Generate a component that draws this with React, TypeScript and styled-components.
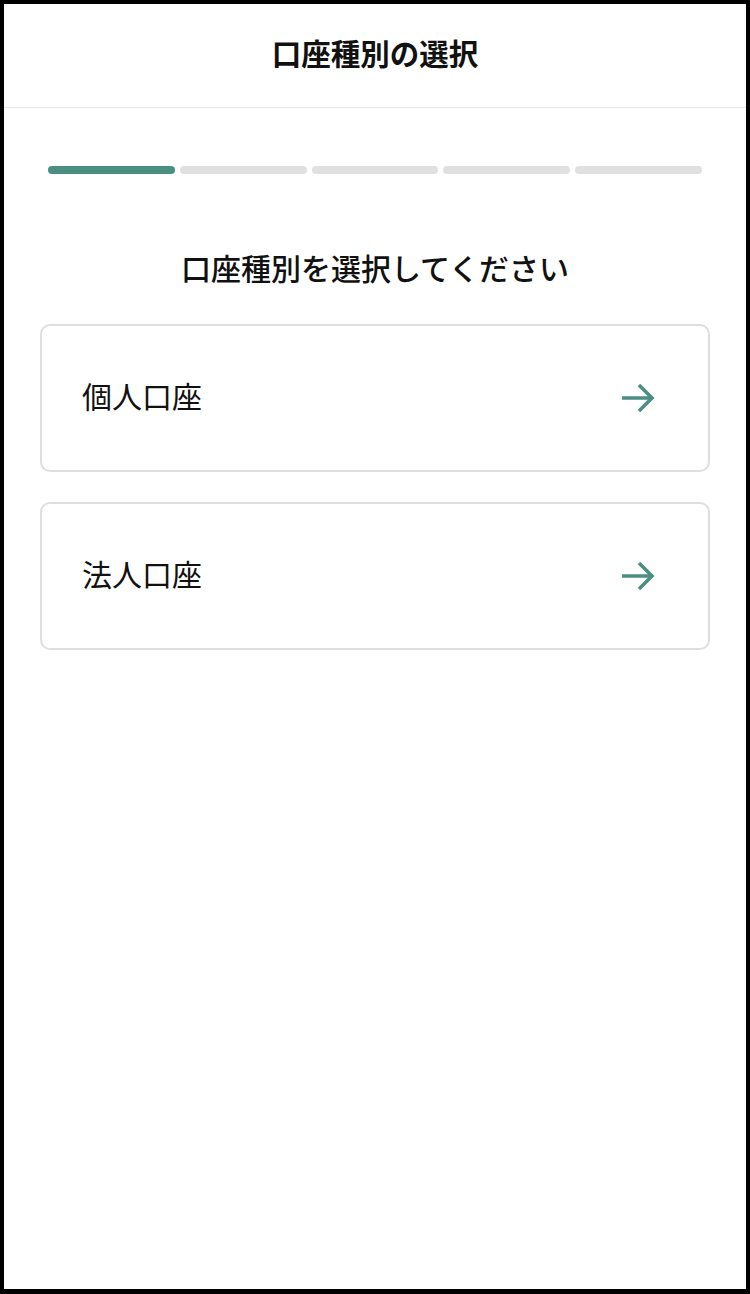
import React from "react";
import styled, { createGlobalStyle } from "styled-components";

const GlobalStyle = createGlobalStyle`
  html, body { margin: 0; padding: 0; background: #fff; }
  body { font-family: "Noto Sans CJK JP", "Noto Sans", sans-serif; color: #111; }
  * { box-sizing: border-box; }
`;

const Frame = styled.div`
  width: 750px;
  height: 1294px;
  border: 4px solid #000;
  border-bottom-width: 5px;
  background: #fff;
  display: flex;
  flex-direction: column;
`;

const Header = styled.header`
  height: 104px;
  border-bottom: 1px solid #e6e6e6;
  display: flex;
  align-items: center;
  justify-content: center;
  padding-bottom: 8px;
`;

const Title = styled.h1`
  margin: 0;
  font-size: 29.5px;
  font-weight: 700;
  letter-spacing: 0;
`;

const Content = styled.main`
  padding: 58px 36px 0;
  display: flex;
  flex-direction: column;
`;

const Progress = styled.div`
  display: grid;
  grid-template-columns: repeat(5, 1fr);
  gap: 5px;
  padding: 0 8px;
`;

const Segment = styled.div<{ $active: boolean }>`
  height: 8px;
  border-radius: 4px;
  background: ${(p) => (p.$active ? "#4a8f82" : "#e0e0e0")};
`;

const Subtitle = styled.h2`
  margin: 75px 0 39px;
  text-align: center;
  font-size: 30px;
  font-weight: 500;
  line-height: 36px;
`;

const CardList = styled.div`
  display: flex;
  flex-direction: column;
  gap: 30px;
`;

const Card = styled.button`
  all: unset;
  box-sizing: border-box;
  height: 148px;
  border: 2px solid #dedede;
  border-radius: 10px;
  display: flex;
  align-items: center;
  justify-content: space-between;
  padding: 0 52px 0 40px;
  cursor: pointer;
  font-family: "Noto Sans CJK JP", "Noto Sans", sans-serif;
`;

const CardLabel = styled.span`
  font-size: 30px;
  font-weight: 400;
  color: #111;
  line-height: 36px;
  margin-top: -6px;
`;

const Arrow = () => (
  <svg width="36" height="32" viewBox="0 0 36 32" fill="none">
    <path
      d="M2 16 H32 M19 3 L32 16 L19 29"
      stroke="#4a8f82"
      strokeWidth="3.6"
      strokeLinecap="butt"
      strokeLinejoin="miter"
    />
  </svg>
);

const options = ["個人口座", "法人口座"];

export default function App() {
  return (
    <>
      <GlobalStyle />
      <Frame>
        <Header>
          <Title>口座種別の選択</Title>
        </Header>
        <Content>
          <Progress>
            {[0, 1, 2, 3, 4].map((i) => (
              <Segment key={i} $active={i === 0} />
            ))}
          </Progress>
          <Subtitle>口座種別を選択してください</Subtitle>
          <CardList>
            {options.map((o) => (
              <Card key={o}>
                <CardLabel>{o}</CardLabel>
                <Arrow />
              </Card>
            ))}
          </CardList>
        </Content>
      </Frame>
    </>
  );
}
